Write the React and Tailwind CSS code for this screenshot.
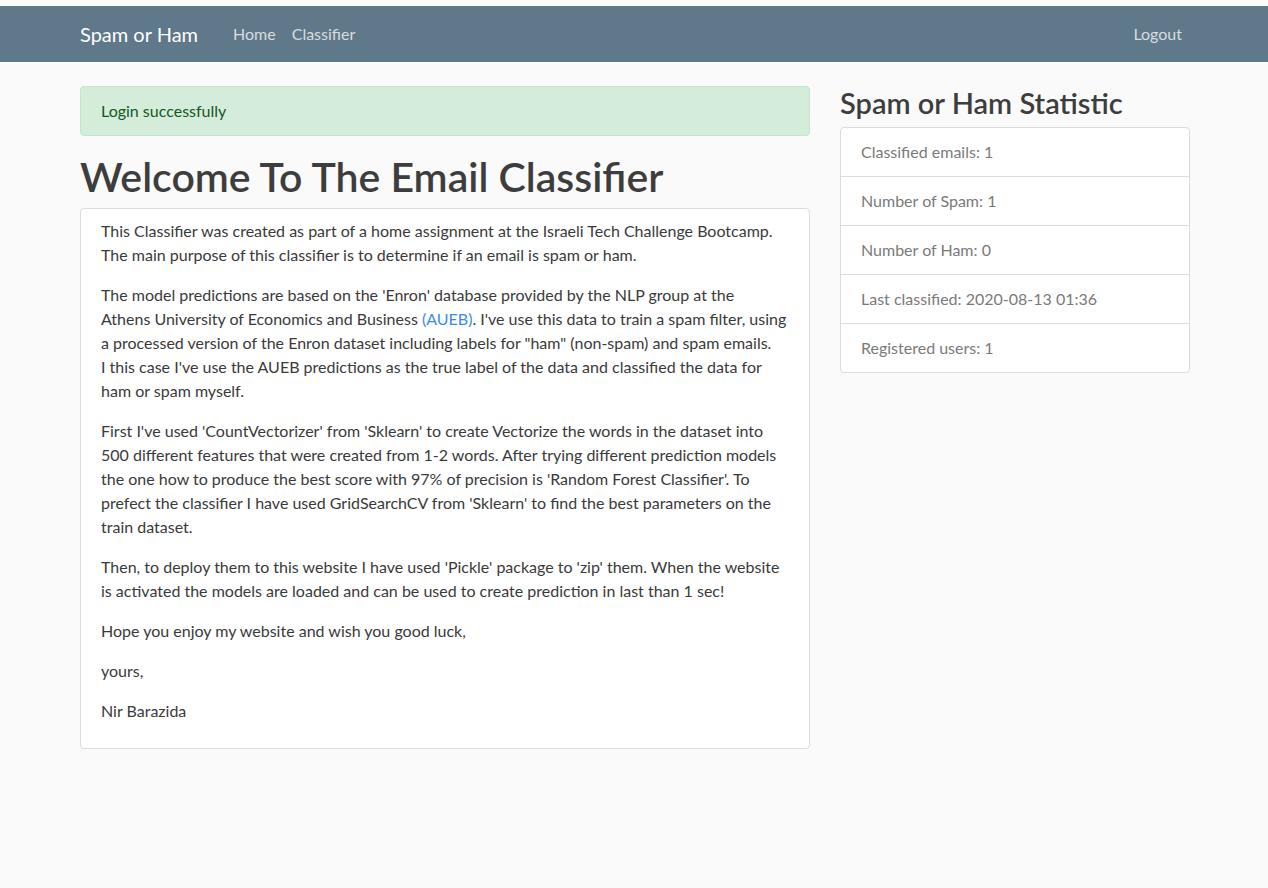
import React from "react";

export default function App() {
  return (
    <div className="min-h-[888px] bg-[#fafafa] text-[#3a3a3a] font-[Lato,'Noto_Sans',sans-serif]">
      <div className="h-[6px] bg-[#fbfbfb]" />
      <nav className="h-[56px] bg-[#5f788a]">
        <div className="mx-auto flex h-full w-[1140px] items-center pl-[16px] pr-[14px]">
          <span className="mr-[35px] text-[20px] leading-[30px] text-white">Spam or Ham</span>
          <span className="pr-[16px] text-[16px] text-white/75">Home</span>
          <span className="text-[16px] text-white/75">Classifier</span>
          <span className="ml-auto px-[8px] text-[16px] text-white/75">Logout</span>
        </div>
      </nav>
      <div className="mx-auto flex w-[1140px] pl-[1px]">
        <div className="w-[760px] shrink-0 px-[15px] pt-[24px]">
          <div className="mb-[17px] rounded-[4px] border border-[#c3e6cb] bg-[#d4edda] px-[20px] py-[12px] text-[16px] leading-[24px] text-[#155724]">
            Login successfully
          </div>
          <h1 className="mb-[7px] text-[41px] font-semibold leading-[48px] text-[#3d3d3d]">
            Welcome To The Email Classifier
          </h1>
          <div className="rounded-[4px] border border-[#dcdcdc] bg-white px-[20px] pt-[10px] pb-[9px] text-[16px] leading-[24px]">
            <p className="mb-[16px]">
              This Classifier was created as part of a home assignment at the Israeli Tech Challenge Bootcamp. The main purpose of this classifier is to determine if an email is spam or ham.
            </p>
            <p className="mb-[16px]">
              The model predictions are based on the 'Enron' database provided by the NLP group at the
              <br />
              Athens University of Economics and Business <span className="text-[#3b8beb]">(AUEB)</span>. I've use this data to train a spam filter, using
              <br />
              a processed version of the Enron dataset including labels for "ham" (non-spam) and spam emails.
              <br />
              I this case I've use the AUEB predictions as the true label of the data and classified the data for
              <br />
              ham or spam myself.
            </p>
            <p className="mb-[16px]">
              First I've used 'CountVectorizer' from 'Sklearn' to create Vectorize the words in the dataset into 500 different features that were created from 1-2 words. After trying different prediction models the one how to produce the best score with 97% of precision is 'Random Forest Classifier'. To prefect the classifier I have used GridSearchCV from 'Sklearn' to find the best parameters on the train dataset.
            </p>
            <p className="mb-[16px]">
              Then, to deploy them to this website I have used 'Pickle' package to 'zip' them. When the website is activated the models are loaded and can be used to create prediction in last than 1 sec!
            </p>
            <p className="mb-[16px]">Hope you enjoy my website and wish you good luck,</p>
            <p className="mb-[16px]">yours,</p>
            <p className="mb-[16px]">Nir Barazida</p>
          </div>
        </div>
        <div className="w-[380px] shrink-0 px-[15px] pt-[24px]">
          <h3 className="mb-[7px] text-[29px] font-semibold leading-[34px] text-[#3d3d3d]">
            Spam or Ham Statistic
          </h3>
          <div className="rounded-[4px] border border-[#dcdcdc] bg-white text-[16px] leading-[24px] text-[#7a7a7a]">
            {[
              "Classified emails: 1",
              "Number of Spam: 1",
              "Number of Ham: 0",
              "Last classified: 2020-08-13 01:36",
              "Registered users: 1",
            ].map((t, i) => (
              <div key={i} className={i > 0 ? "border-t border-[#dcdcdc] px-[20px] py-[12px]" : "px-[20px] py-[12px]"}>
                {t}
              </div>
            ))}
          </div>
        </div>
      </div>
    </div>
  );
}
